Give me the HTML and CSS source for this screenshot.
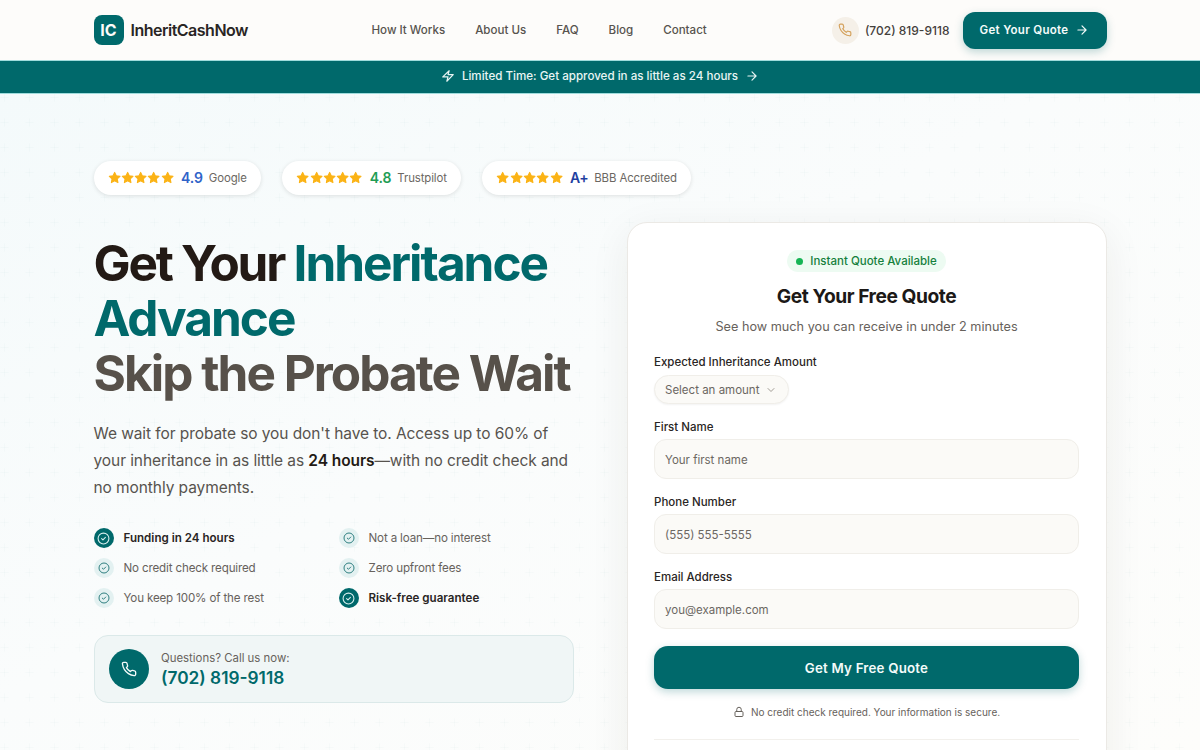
FILE: index.html
```html
<!DOCTYPE html>
<html lang="en">
<head>
  <meta charset="UTF-8">
  <meta name="viewport" content="width=device-width, initial-scale=1.0">
  <title>InheritCashNow</title>
  <link rel="stylesheet" href="styles.css">
</head>
<body>
  <svg class="sprite" width="0" height="0" aria-hidden="true">
    <symbol id="star" viewBox="0 0 24 24"><path fill="currentColor" stroke="currentColor" stroke-width="2" stroke-linejoin="round" d="M12 2.500l2.900 6.200 6.700.9-4.900 4.600 1.200 6.700-5.900-3.300-5.900 3.300 1.200-6.700-4.900-4.600 6.700-.9z"/></symbol>
    <symbol id="phone" viewBox="0 0 24 24"><path fill="none" stroke="currentColor" stroke-width="2" stroke-linecap="round" stroke-linejoin="round" d="M22 16.920v3a2 2 0 0 1-2.180 2 19.790 19.790 0 0 1-8.630-3.070 19.500 19.500 0 0 1-6-6 19.790 19.790 0 0 1-3.070-8.670A2 2 0 0 1 4.110 2h3a2 2 0 0 1 2 1.720c.13.960.36 1.900.7 2.810a2 2 0 0 1-.45 2.110L8.090 9.910a16 16 0 0 0 6 6l1.270-1.270a2 2 0 0 1 2.110-.45c.91.34 1.850.57 2.810.7A2 2 0 0 1 22 16.920z"/></symbol>
    <symbol id="arrow" viewBox="0 0 24 24"><path fill="none" stroke="currentColor" stroke-width="2" stroke-linecap="round" stroke-linejoin="round" d="M5 12h14M12 5l7 7-7 7"/></symbol>
    <symbol id="check" viewBox="0 0 24 24"><circle cx="12" cy="12" r="10" fill="none" stroke="currentColor" stroke-width="2"/><path fill="none" stroke="currentColor" stroke-width="2" stroke-linecap="round" stroke-linejoin="round" d="M8.500 12.200l2.500 2.300 4.500-4.500"/></symbol>
  </svg>

  <header class="site-header">
    <div class="wrap header-row">
      <a class="logo" href="#"><span class="logo-mark">IC</span><span class="logo-name">InheritCashNow</span></a>
      <nav class="main-nav">
        <a href="#">How It Works</a>
        <a href="#">About Us</a>
        <a href="#">FAQ</a>
        <a href="#">Blog</a>
        <a href="#">Contact</a>
      </nav>
      <div class="header-actions">
        <span class="phone-bubble"><svg class="icon-14"><use href="#phone"/></svg></span>
        <a class="header-phone" href="#">(702) 819-9118</a>
        <a class="btn-quote" href="#">Get Your Quote <svg class="icon-14"><use href="#arrow"/></svg></a>
      </div>
    </div>
  </header>

  <div class="promo-bar">
    <svg class="icon-14" viewBox="0 0 24 24"><path fill="none" stroke="currentColor" stroke-width="2" stroke-linecap="round" stroke-linejoin="round" d="M7 13.500H3L14 3l-2 6.500h9L10 21l2-7.500z"/></svg>
    <span>Limited Time: Get approved in as little as 24 hours</span>
    <svg class="icon-14 promo-arrow"><use href="#arrow"/></svg>
  </div>

  <main class="hero">
    <div class="wrap">
      <div class="ratings">
        <div class="rating-pill">
          <span class="stars"><svg><use href="#star"/></svg><svg><use href="#star"/></svg><svg><use href="#star"/></svg><svg><use href="#star"/></svg><svg><use href="#star"/></svg></span>
          <b class="score score-google">4.9</b><span class="source">Google</span>
        </div>
        <div class="rating-pill">
          <span class="stars"><svg><use href="#star"/></svg><svg><use href="#star"/></svg><svg><use href="#star"/></svg><svg><use href="#star"/></svg><svg><use href="#star"/></svg></span>
          <b class="score score-trust">4.8</b><span class="source">Trustpilot</span>
        </div>
        <div class="rating-pill">
          <span class="stars"><svg><use href="#star"/></svg><svg><use href="#star"/></svg><svg><use href="#star"/></svg><svg><use href="#star"/></svg><svg><use href="#star"/></svg></span>
          <b class="score score-bbb">A+</b><span class="source">BBB Accredited</span>
        </div>
      </div>

      <div class="hero-grid">
        <section class="hero-left">
          <h1>Get Your <em>Inheritance Advance</em><br><span class="muted-line">Skip the Probate Wait</span></h1>
          <p class="lead">We wait for probate so you don't have to. Access up to 60% of your inheritance in as little as <strong>24 hours</strong>—with no credit check and no monthly payments.</p>

          <ul class="benefits">
            <li class="strong"><span class="tick"><svg><use href="#check"/></svg></span>Funding in 24 hours</li>
            <li><span class="tick"><svg><use href="#check"/></svg></span>Not a loan—no interest</li>
            <li><span class="tick"><svg><use href="#check"/></svg></span>No credit check required</li>
            <li><span class="tick"><svg><use href="#check"/></svg></span>Zero upfront fees</li>
            <li><span class="tick"><svg><use href="#check"/></svg></span>You keep 100% of the rest</li>
            <li class="strong"><span class="tick"><svg><use href="#check"/></svg></span>Risk-free guarantee</li>
          </ul>

          <div class="call-box">
            <span class="call-icon"><svg><use href="#phone"/></svg></span>
            <div>
              <p class="call-label">Questions? Call us now:</p>
              <p class="call-number">(702) 819-9118</p>
            </div>
          </div>
        </section>

        <section class="quote-card">
          <div class="card-head">
            <span class="instant"><i></i>Instant Quote Available</span>
            <h2>Get Your Free Quote</h2>
            <p>See how much you can receive in under 2 minutes</p>
          </div>
          <form class="quote-form">
            <div class="field">
              <label for="amount">Expected Inheritance Amount</label>
              <div class="select-box" id="amount">Select an amount
                <svg class="icon-12" viewBox="0 0 24 24"><path fill="none" stroke="currentColor" stroke-width="2" stroke-linecap="round" stroke-linejoin="round" d="M6 9l6 6 6-6"/></svg>
              </div>
            </div>
            <div class="field">
              <label for="firstName">First Name</label>
              <input id="firstName" type="text" placeholder="Your first name">
            </div>
            <div class="field">
              <label for="phone">Phone Number</label>
              <input id="phone" type="tel" placeholder="(555) 555-5555">
            </div>
            <div class="field">
              <label for="email">Email Address</label>
              <input id="email" type="email" placeholder="you@example.com">
            </div>
            <button class="btn-submit" type="button">Get My Free Quote</button>
            <p class="secure">
              <svg class="icon-12" viewBox="0 0 24 24"><rect x="4" y="11" width="16" height="10" rx="2" fill="none" stroke="currentColor" stroke-width="2"/><path fill="none" stroke="currentColor" stroke-width="2" d="M7.500 11V7a4.500 4.500 0 0 1 9 0v4"/></svg>
              No credit check required. Your information is secure.
            </p>
          </form>
          <div class="card-rule"></div>
        </section>
      </div>
    </div>
  </main>
</body>
</html>
```

FILE: styles.css
```css
* {
  box-sizing: border-box;
}

html,
body {
  height: 750px;
  overflow: hidden;
}

body {
  margin: 0;
  font-family: "Inter", "Liberation Sans", sans-serif;
  color: #1c1917;
  background: #fdfcfa;
}

a {
  color: inherit;
  text-decoration: none;
}

.sprite {
  position: absolute;
}

.wrap {
  width: 1013px;
  margin: 0 auto;
}

.icon-14 {
  width: 14px;
  height: 14px;
  flex: none;
}

.icon-12 {
  width: 12px;
  height: 12px;
  flex: none;
}

/* header */
.site-header {
  height: 60px;
  background: #fdfcfa;
}

.header-row {
  height: 60px;
  display: flex;
  align-items: center;
}

.logo {
  display: flex;
  align-items: center;
  gap: 7px;
  width: 278px;
}

.logo-mark {
  width: 30px;
  height: 30px;
  border-radius: 8px;
  background: #00696b;
  color: #fdfcfa;
  font-size: 16px;
  font-weight: 700;
  display: flex;
  align-items: center;
  justify-content: center;
}

.logo-name {
  font-size: 16px;
  font-weight: 600;
  letter-spacing: -0.500px;
  color: #292524;
}

.main-nav {
  display: flex;
  gap: 30px;
  font-size: 11.550px;
  font-weight: 500;
  color: #57534e;
}

.header-actions {
  margin-left: auto;
  display: flex;
  align-items: center;
}

.phone-bubble {
  width: 27px;
  height: 27px;
  border-radius: 50%;
  background: #f5f0e8;
  color: #d4a15c;
  display: flex;
  align-items: center;
  justify-content: center;
  margin-right: 6px;
}

.header-phone {
  font-size: 12px;
  font-weight: 500;
  color: #44403c;
  margin-right: 13px;
}

.btn-quote {
  height: 37px;
  width: 144px;
  border-radius: 12px;
  background: #00696b;
  color: #f4fbfa;
  font-size: 11.500px;
  font-weight: 600;
  letter-spacing: 0.300px;
  display: flex;
  align-items: center;
  justify-content: center;
  gap: 7px;
  box-shadow: 0 3px 8px rgba(0, 105, 107, 0.25);
}

/* promo */
.promo-bar {
  height: 34px;
  padding-bottom: 2px;
  background: #00696b;
  border-top: 1px solid #9fdcdc;
  border-bottom: 1px solid #9fdcdc;
  color: #e8f5f4;
  font-size: 11.600px;
  font-weight: 500;
  display: flex;
  align-items: center;
  justify-content: center;
  gap: 7px;
}

/* hero */
.hero {
  height: 656px;
  overflow: hidden;
  padding-top: 67px;
  background-color: #fcfcfa;
  background-image:
    url("data:image/svg+xml,%3Csvg xmlns='http://www.w3.org/2000/svg' width='25' height='25'%3E%3Cpath d='M12.500 8.500v8M8.500 12.500h8' stroke='%23006a6b' stroke-opacity='.018'/%3E%3C/svg%3E"),
    linear-gradient(150deg, #f4fafb 0%, #fafcfc 45%, #fdfdfb 100%);
  background-size: 25px 25px, 100% 100%;
  background-position: -8.500px -9.500px, 0 0;
}

.ratings {
  display: flex;
  gap: 21px;
  height: 34px;
}

.rating-pill {
  height: 34px;
  padding: 0 14.500px 1px 14px;
  border-radius: 17px;
  background: #fff;
  box-shadow: 0 1px 4px rgba(28, 25, 23, 0.12);
  display: flex;
  align-items: center;
  font-size: 11.400px;
  letter-spacing: -0.100px;
  color: #6b6762;
}

.stars {
  display: flex;
  color: #fbb316;
  margin-right: 7px;
}

.stars svg {
  width: 13.300px;
  height: 13.300px;
}

.score {
  font-size: 14px;
  font-weight: 600;
  margin-right: 6px;
}

.score-google {
  color: #2f63c9;
}

.score-trust {
  color: #1f9d55;
}

.score-bbb {
  color: #1e40a0;
  letter-spacing: -0.400px;
}

.hero-grid {
  display: grid;
  grid-template-columns: 480px 480px;
  justify-content: space-between;
  margin-top: 27px;
}

.hero-left {
  padding-top: 14px;
}

h1 {
  margin: 0;
  font-size: 49.500px;
  line-height: 55px;
  font-weight: 700;
  letter-spacing: -2.250px;
  color: #231a15;
}

h1 em {
  font-style: normal;
  letter-spacing: -2px;
  color: #00696b;
}

.muted-line {
  letter-spacing: -1.950px;
  color: #57514a;
}

.lead {
  margin: 19px 0 0;
  font-size: 15.500px;
  line-height: 27px;
  letter-spacing: -0.080px;
  color: #57534e;
}

.lead strong {
  font-weight: 600;
  color: #231a15;
}

.benefits {
  list-style: none;
  margin: 27px 0 0;
  padding: 0;
  display: grid;
  grid-template-columns: 245px 1fr;
  row-gap: 10px;
  font-size: 11.600px;
  letter-spacing: -0.150px;
  color: #67625c;
}

.benefits li {
  height: 20px;
  display: flex;
  align-items: center;
  gap: 10px;
}

.tick {
  width: 20px;
  height: 20px;
  border-radius: 50%;
  background: #e3f1f1;
  color: #2e7f80;
  display: flex;
  align-items: center;
  justify-content: center;
}

.tick svg {
  width: 12px;
  height: 12px;
}

.benefits .strong {
  color: #292524;
  font-weight: 600;
  letter-spacing: 0;
}

.strong .tick {
  background: #00696b;
  color: #d5eeee;
}

.strong .tick svg {
  width: 13px;
  height: 13px;
}

.call-box {
  margin-top: 27px;
  height: 68px;
  border: 1px solid #dbe9e9;
  border-radius: 14px;
  background: #f0f6f6;
  padding: 0 14px;
  display: flex;
  align-items: center;
  gap: 12.500px;
}

.call-icon {
  width: 40px;
  height: 40px;
  border-radius: 50%;
  background: #00696b;
  color: #f4fbfa;
  display: flex;
  align-items: center;
  justify-content: center;
}

.call-icon svg {
  width: 16px;
  height: 16px;
}

.call-label {
  margin: 1px 0 0;
  font-size: 11.400px;
  line-height: 16px;
  color: #67625c;
}

.call-number {
  margin: 1px 0 0;
  font-size: 17.300px;
  line-height: 22px;
  font-weight: 600;
  color: #00696b;
}

/* quote card */
.quote-card {
  height: 600px;
  background: #fff;
  border: 1px solid #ebe9e5;
  border-radius: 20px;
  padding: 27px 26.500px 0;
  box-shadow: 0 10px 40px rgba(40, 40, 30, 0.07);
}

.card-head {
  text-align: center;
}

.instant {
  display: flex;
  width: fit-content;
  margin: 0 auto;
  align-items: center;
  gap: 7px;
  height: 22px;
  padding: 0 9px;
  border-radius: 11px;
  background: #edfbf2;
  color: #15803d;
  font-size: 11.500px;
  font-weight: 500;
}

.instant i {
  width: 7px;
  height: 7px;
  border-radius: 50%;
  background: #16b455;
}

.card-head h2 {
  margin: 12px 0 0;
  font-size: 19.200px;
  line-height: 24px;
  font-weight: 700;
  letter-spacing: -0.450px;
  color: #1c1917;
}

.card-head p {
  margin: 8.500px 0 0;
  font-size: 12.700px;
  line-height: 20px;
  color: #67625c;
}

.quote-form {
  margin-top: 16.500px;
}

.field {
  margin-bottom: 14px;
}

.field label {
  display: block;
  padding-top: 1px;
  font-size: 11.500px;
  line-height: 16px;
  font-weight: 500;
  color: #292524;
  margin-bottom: 4px;
}

.select-box {
  display: flex;
  width: fit-content;
  margin-top: 5px;
  align-items: center;
  gap: 6px;
  height: 29px;
  padding: 0 11px 0 10px;
  border: 1px solid #f0eee9;
  border-radius: 15px;
  background: #fbfaf7;
  font-size: 11.500px;
  color: #6b6762;
  box-shadow: 0 1px 2px rgba(28, 25, 23, 0.05);
}

.select-box svg {
  color: #a19c95;
}

.field input {
  display: block;
  width: 100%;
  height: 40px;
  padding: 2px 10px 0;
  border: 1px solid #f0eee9;
  border-radius: 12px;
  background: #fbfaf7;
  font-family: inherit;
  font-size: 11.500px;
  color: #292524;
}

.field input::placeholder {
  color: #6b6762;
  opacity: 1;
}

.btn-submit {
  display: block;
  width: 100%;
  height: 43px;
  margin-top: 17px;
  border: none;
  border-radius: 14px;
  background: #00696b;
  color: #f4fbfa;
  font-family: inherit;
  font-size: 13.300px;
  font-weight: 600;
  letter-spacing: 0.200px;
  box-shadow: 0 3px 8px rgba(0, 105, 107, 0.25);
}

.secure {
  margin: 15px 0 0;
  display: flex;
  align-items: center;
  justify-content: center;
  gap: 6px;
  font-size: 10px;
  line-height: 16px;
  color: #67625c;
}

.card-rule {
  margin-top: 19px;
  border-top: 1px solid #f2f0ec;
}
```
